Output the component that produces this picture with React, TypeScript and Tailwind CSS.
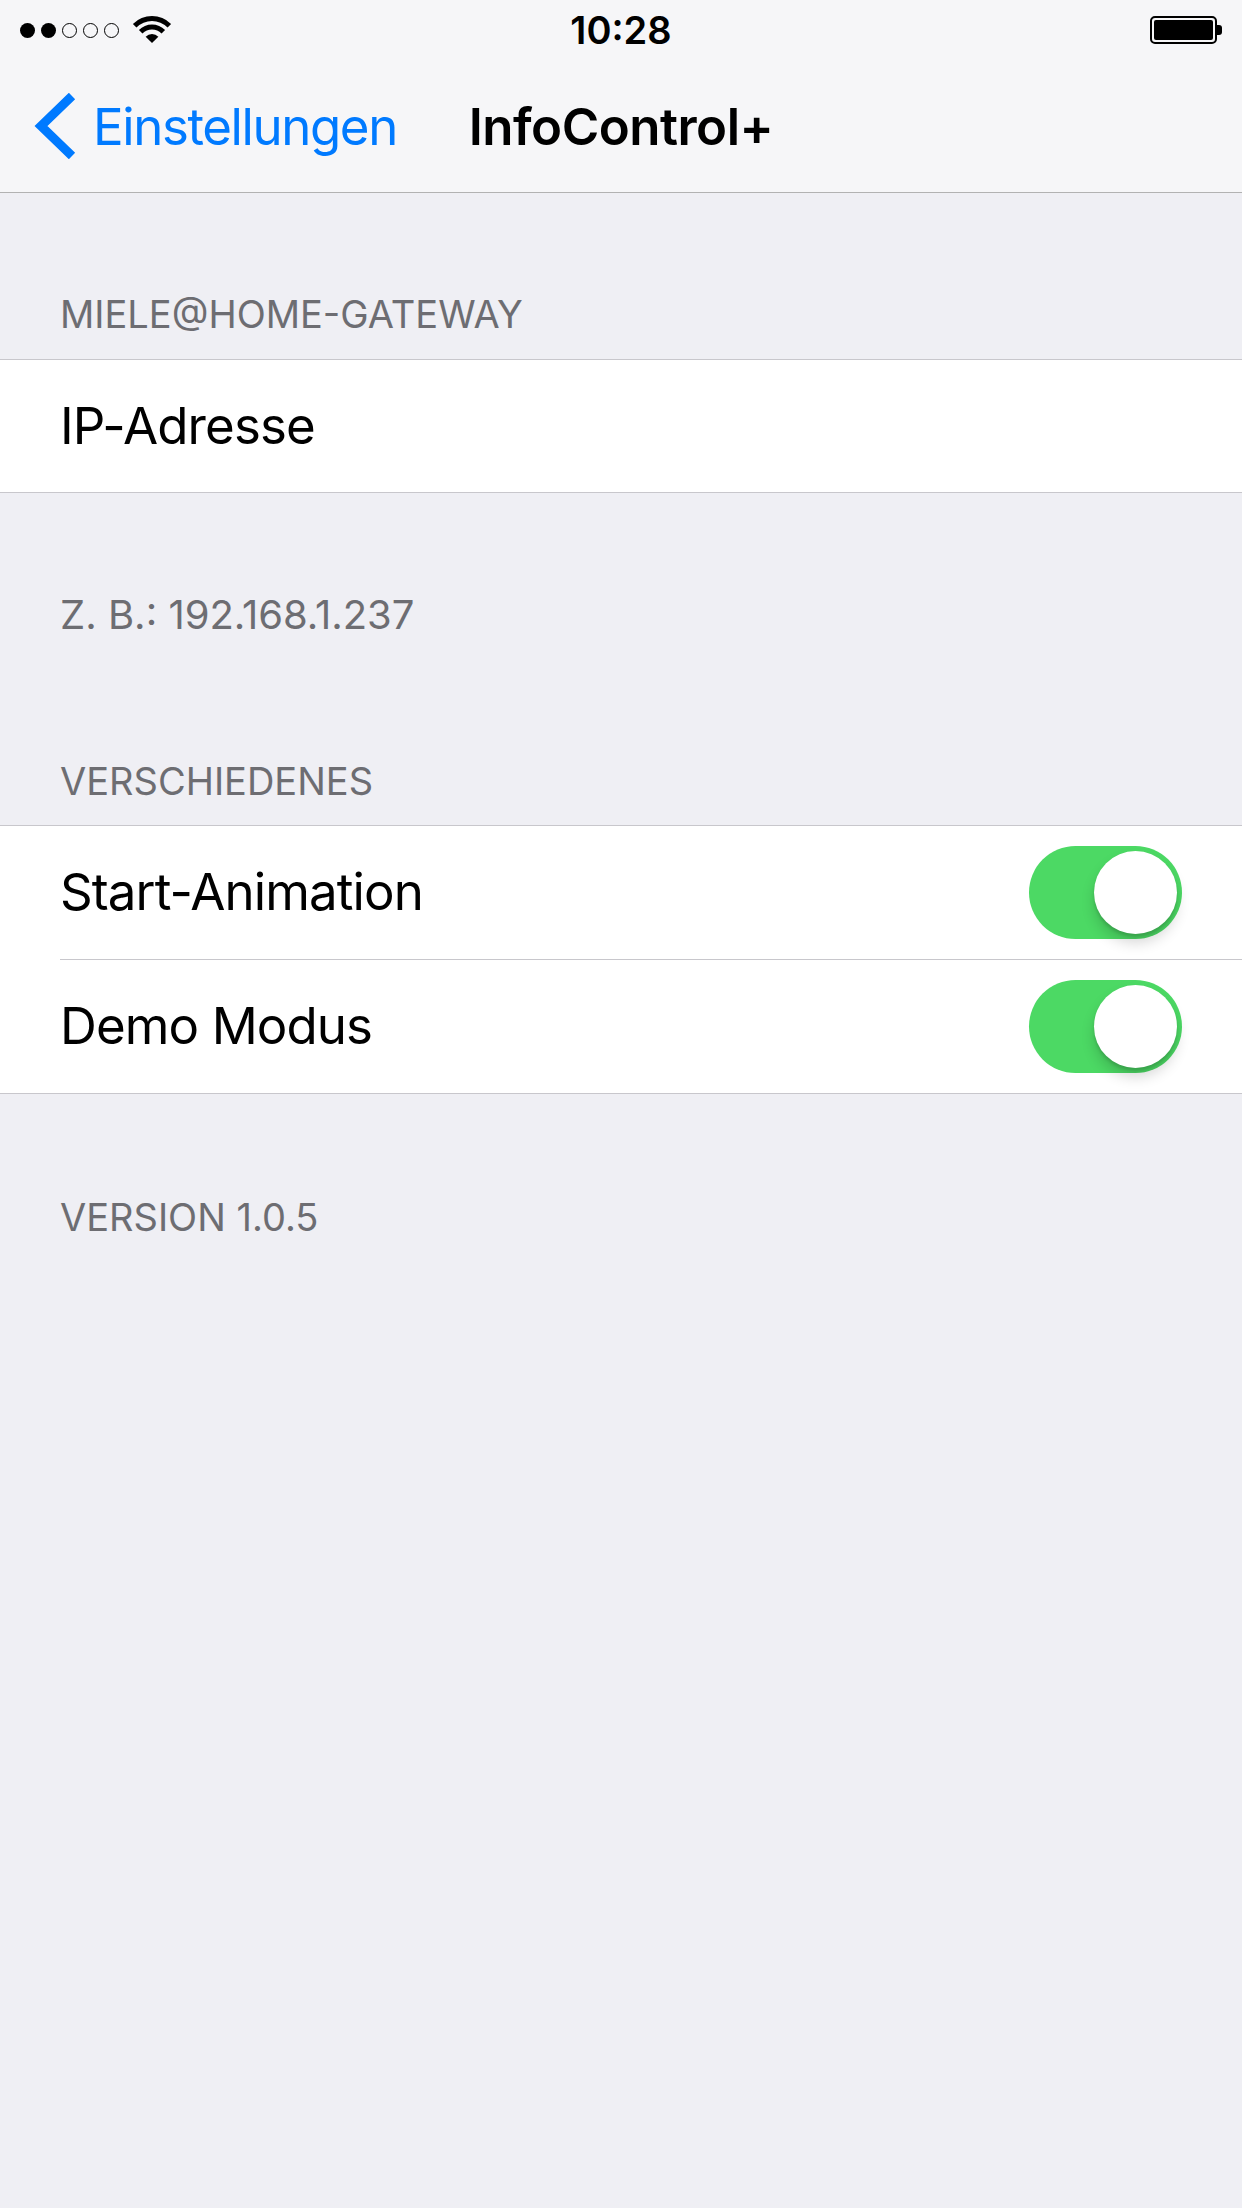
import React from "react";

const font = { fontFamily: "Inter, 'Noto Sans', sans-serif" };

function SignalDots() {
  return (
    <div className="flex items-center gap-[6px]">
      {[0, 1, 2, 3, 4].map((i) => (
        <span
          key={i}
          className={`block w-[15px] h-[15px] rounded-full ${
            i < 2 ? "bg-black" : "border-[1.5px] border-black"
          }`}
        />
      ))}
    </div>
  );
}

function Wifi() {
  return (
    <svg width="40" height="28" viewBox="0 0 40 28" className="ml-[13px]">
      <path
        d="M0.91 7.91 A27 27 0 0 1 39.09 7.91 L35.56 11.44 A22 22 0 0 0 4.44 11.44 Z"
        fill="#000"
      />
      <path
        d="M6.92 13.92 A18.5 18.5 0 0 1 33.08 13.92 L29.55 17.45 A13.5 13.5 0 0 0 10.45 17.45 Z"
        fill="#000"
      />
      <path d="M13.64 20.64 A9 9 0 0 1 26.36 20.64 L20 27 Z" fill="#000" />
    </svg>
  );
}

function Battery() {
  return (
    <div className="flex items-center">
      <div className="w-[67px] h-[28px] rounded-[5px] border-[2px] border-black p-[2px]">
        <div className="w-full h-full rounded-[2px] bg-black" />
      </div>
      <div className="w-[5px] h-[10px] rounded-r-[3px] bg-black" />
    </div>
  );
}

function Toggle() {
  return (
    <div className="relative w-[153px] h-[93px] rounded-full bg-[#4cd964]">
      <div className="absolute right-[5px] top-[5px] w-[83px] h-[83px] rounded-full bg-white shadow-[0_9px_14px_rgba(0,0,0,0.16),0_3px_3px_rgba(0,0,0,0.12)]" />
    </div>
  );
}

function SectionText({ children, className = "" }: { children: React.ReactNode; className?: string }) {
  return (
    <div className={`px-[60px] leading-[46px] text-[#6d6d72] ${className}`}>{children}</div>
  );
}

export default function App() {
  return (
    <div className="w-[1242px] h-[2208px] bg-[#efeff4] text-black" style={font}>
      {/* Status + Nav */}
      <header className="bg-[#f6f6f8] border-b border-[#b2b2b2]">
        <div className="h-[60px] px-[20px] grid grid-cols-[1fr_auto_1fr] items-center">
          <div className="flex items-center">
            <SignalDots />
            <Wifi />
          </div>
          <div className="text-[38px] font-semibold leading-none">10:28</div>
          <div className="flex justify-end">
            <Battery />
          </div>
        </div>
        <nav className="h-[132px] grid grid-cols-[1fr_auto_1fr] items-center">
          <div className="flex items-center pl-[33px] text-[#007aff]">
            <svg width="44" height="66" viewBox="0 0 44 66">
              <path d="M39 3 L8 33 L39 63" fill="none" stroke="#007aff" strokeWidth="9" />
            </svg>
            <span className="ml-[16px] text-[51px] leading-none tracking-[-1.4px]">Einstellungen</span>
          </div>
          <div className="text-[51px] font-semibold leading-none tracking-[-0.5px]">InfoControl+</div>
          <div />
        </nav>
      </header>

      {/* Gateway section */}
      <SectionText className="pt-[98px] pb-[22px] text-[38px] uppercase">Miele@Home-Gateway</SectionText>
      <div className="bg-white border-y border-[#c8c7cc]">
        <div className="h-[132px] flex items-center px-[60px] text-[51px] tracking-[-0.9px]">IP-Adresse</div>
      </div>
      <SectionText className="pt-[99px] text-[40px]">Z. B.: 192.168.1.237</SectionText>

      {/* Misc section */}
      <SectionText className="pt-[120px] pb-[21px] text-[38px] uppercase">Verschiedenes</SectionText>
      <div className="bg-white border-y border-[#c8c7cc]">
        <div className="h-[133px] flex items-center justify-between pl-[60px] pr-[60px] text-[51px] tracking-[-0.9px]">
          <span>Start-Animation</span>
          <Toggle />
        </div>
        <div className="ml-[60px] h-px bg-[#c8c7cc]" />
        <div className="h-[133px] flex items-center justify-between pl-[60px] pr-[60px] text-[51px] tracking-[-0.9px]">
          <span>Demo Modus</span>
          <Toggle />
        </div>
      </div>

      <SectionText className="pt-[100px] text-[38px] uppercase">Version 1.0.5</SectionText>
    </div>
  );
}
